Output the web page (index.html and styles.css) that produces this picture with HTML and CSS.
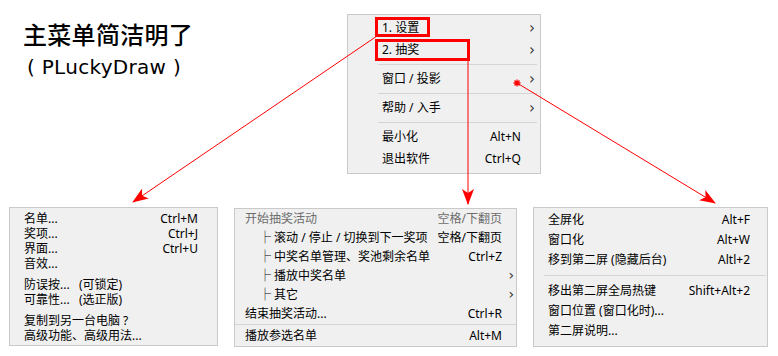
FILE: index.html
```html
<!DOCTYPE html>
<html lang="zh">
<head>
<meta charset="utf-8">
<link rel="stylesheet" href="styles.css">
</head>
<body>
<div class="page">
  <div class="top">
    <div class="title">
      <div class="title-cn">主菜单简洁明了</div>
      <div class="title-en">( PLuckyDraw )</div>
    </div>
    <div class="menu menu-main">
      <div class="item"><span>1. 设置</span><span></span><span class="arr">›</span></div>
      <div class="item"><span>2. 抽奖</span><span></span><span class="arr">›</span></div>
      <div class="sep"></div>
      <div class="item"><span>窗口 / 投影</span><span></span><span class="arr">›</span></div>
      <div class="sep"></div>
      <div class="item"><span>帮助 / 入手</span><span></span><span class="arr">›</span></div>
      <div class="sep"></div>
      <div class="item"><span>最小化</span><span class="key">Alt+N</span><span></span></div>
      <div class="item"><span>退出软件</span><span class="key">Ctrl+Q</span><span></span></div>
    </div>
  </div>
  <div class="bottom">
    <div class="menu menu-a">
      <div class="group">
        <div class="row"><span>名单...</span><span class="key">Ctrl+M</span></div>
        <div class="row"><span>奖项...</span><span class="key">Ctrl+J</span></div>
        <div class="row"><span>界面...</span><span class="key">Ctrl+U</span></div>
        <div class="row"><span>音效...</span><span></span></div>
      </div>
      <div class="group">
        <div class="row"><span>防误按...&nbsp;&nbsp;&nbsp;(可锁定)</span><span></span></div>
        <div class="row"><span>可靠性...&nbsp;&nbsp;&nbsp;(选正版)</span><span></span></div>
      </div>
      <div class="group">
        <div class="row"><span>复制到另一台电脑 ?</span><span></span></div>
        <div class="row"><span>高级功能、高级用法...</span><span></span></div>
      </div>
    </div>
    <div class="menu menu-b">
      <div class="item dim"><span>开始抽奖活动</span><span class="key">空格/下翻页</span><span></span></div>
      <div class="item"><span class="sub">├ 滚动 / 停止 / 切换到下一奖项</span><span class="key">空格/下翻页</span><span></span></div>
      <div class="item"><span class="sub">├ 中奖名单管理、奖池剩余名单</span><span class="key">Ctrl+Z</span><span></span></div>
      <div class="item"><span class="sub">├ 播放中奖名单</span><span></span><span class="arr">›</span></div>
      <div class="item"><span class="sub">├ 其它</span><span></span><span class="arr">›</span></div>
      <div class="item"><span>结束抽奖活动...</span><span class="key">Ctrl+R</span><span></span></div>
      <div class="sep"></div>
      <div class="item"><span>播放参选名单</span><span class="key">Alt+M</span><span></span></div>
    </div>
    <div class="menu menu-c">
      <div class="row"><span>全屏化</span><span class="key">Alt+F</span></div>
      <div class="row"><span>窗口化</span><span class="key">Alt+W</span></div>
      <div class="row"><span>移到第二屏 (隐藏后台)</span><span class="key">Altl+2</span></div>
      <div class="sep"></div>
      <div class="row"><span>移出第二屏全局热键</span><span class="key">Shift+Alt+2</span></div>
      <div class="row"><span>窗口位置 (窗口化时)...</span><span></span></div>
      <div class="row"><span>第二屏说明...</span><span></span></div>
    </div>
  </div>
  <svg class="notes" width="778" height="356" viewBox="0 0 778 356" xmlns="http://www.w3.org/2000/svg">
    <defs>
      <marker id="head" markerUnits="userSpaceOnUse" markerWidth="16" markerHeight="12" refX="15" refY="6" orient="auto">
        <path d="M0 0 L16 6 L0 12 L4 6 Z" fill="#ff0000"/>
      </marker>
    </defs>
    <rect x="376.5" y="18.5" width="52" height="17" fill="none" stroke="#ff0000" stroke-width="3"/>
    <rect x="376.5" y="40.5" width="92" height="19" fill="none" stroke="#ff0000" stroke-width="3"/>
    <line x1="377" y1="36" x2="133" y2="202" stroke="#ff0000" stroke-width="1" marker-end="url(#head)"/>
    <line x1="468" y1="61" x2="468" y2="204" stroke="#ff0000" stroke-width="1" marker-end="url(#head)"/>
    <line x1="517" y1="83" x2="715" y2="203" stroke="#ff0000" stroke-width="1" marker-end="url(#head)"/>
    <path d="M513.5 83 H520.5 M517 79.5 V86.5 M514.5 80.5 L519.5 85.5 M519.5 80.5 L514.5 85.5" stroke="#ff0000" stroke-width="1.3"/>
  </svg>
</div>
</body>
</html>
```
FILE: styles.css
```css
* { box-sizing: border-box; }
html, body { margin: 0; padding: 0; background: #ffffff; }
body {
  width: 778px;
  height: 356px;
  overflow: hidden;
  font-family: "Noto Sans", "Noto Sans CJK SC", sans-serif;
  font-size: 12px;
  line-height: 15px;
  color: #000;
}
.page { position: relative; width: 778px; height: 356px; }

.top { display: flex; height: 207px; }
.title { width: 347px; padding: 20px 0 0 23px; }
.title-cn {
  font-family: "Noto Sans CJK SC", sans-serif;
  font-size: 24px;
  font-weight: 500;
  line-height: 28px;
  letter-spacing: 0.3px;
}
.title-en {
  font-family: "DejaVu Sans", sans-serif;
  font-size: 20px;
  line-height: 26px;
  margin-top: 6px;
  padding-left: 4px;
  letter-spacing: 0.3px;
}

.menu {
  background: #f0f0f0;
  border: 1px solid #cacaca;
}
.menu-main {
  width: 194px;
  height: 160px;
  margin-top: 14px;
  padding: 2px 5px 3px 34px;
}
.item {
  display: grid;
  grid-template-columns: 1fr auto 14px;
  align-items: center;
  white-space: nowrap;
}
.menu-main .item { height: 22px; line-height: 22px; }
.key { text-align: right; }
.arr {
  text-align: right;
  font-size: 15px;
  color: #333;
  font-family: "DejaVu Sans", sans-serif;
}
.sep {
  height: 7px;
  position: relative;
}
.sep::after {
  content: "";
  position: absolute;
  left: 0; right: 0; top: 3px;
  height: 1px;
  background: #d5d5d5;
}
.menu-main .sep { margin-left: -4px; margin-right: -2px; }

.bottom {
  display: flex;
  align-items: flex-start;
  gap: 16px;
  padding-left: 9px;
}
.menu-a {
  width: 209px;
  height: 139px;
  padding: 3px 19px 2px 14px;
}
.group + .group { margin-top: 6px; }
.row {
  display: flex;
  justify-content: space-between;
  align-items: center;
  white-space: nowrap;
}
.menu-a .row { height: 15px; line-height: 15px; }

.menu-b {
  width: 283px;
  height: 139px;
  margin-top: 1px;
  padding: 0 2px 1px 10px;
}
.menu-b .item { height: 19px; line-height: 19px; grid-template-columns: 1fr auto 12px; }
.menu-b .sep { height: 3px; margin-left: -10px; margin-right: -2px; }
.menu-b .sep::after { top: 1px; }
.menu-b .arr { font-size: 14px; }
.dim { color: #6d6d6d; }
.sub { padding-left: 14px; }

.menu-c {
  width: 235px;
  height: 140px;
  padding: 2px 17px 5px 14px;
}
.menu-c .row { height: 20px; line-height: 20px; }
.menu-c .sep { height: 11px; margin-left: -4px; margin-right: -16px; }
.menu-c .sep::after { top: 5px; }

.notes {
  position: absolute;
  left: 0;
  top: 0;
  pointer-events: none;
}
```
